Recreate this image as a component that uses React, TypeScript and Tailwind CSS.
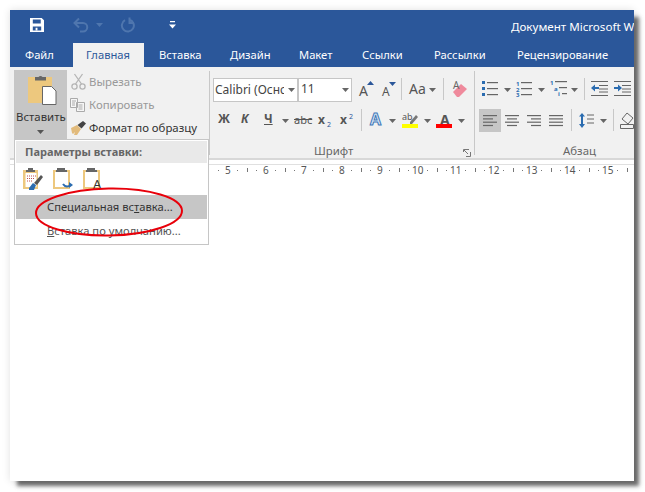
import React from "react";

const Abs = ({ x, y, c = "", children }: { x: number; y: number; c?: string; children: React.ReactNode }) => (
  <div className={"absolute whitespace-nowrap leading-none " + c} style={{ left: x, top: y }}>{children}</div>
);

const Sep = ({ x, y, h }: { x: number; y: number; h: number }) => (
  <div className="absolute w-px bg-[#c8c8c8]" style={{ left: x, top: y, height: h }} />
);

const Caret = ({ x, y, color = "#666" }: { x: number; y: number; color?: string }) => (
  <svg className="absolute" style={{ left: x, top: y }} width="7" height="4" viewBox="0 0 7 4"><path d="M0 0h7L3.5 4z" fill={color} /></svg>
);

const Lines = ({ x, y, kind }: { x: number; y: number; kind: number[][] }) => (
  <svg className="absolute" style={{ left: x, top: y }} width="16" height="12" viewBox="0 0 16 12">
    {kind.map(([a, b], i) => <rect key={i} x={a} y={i * 3.3} width={b - a} height="1.2" fill="#666" />)}
  </svg>
);

const rulerNums = [5, 6, 7, 8, 9, 10, 11, 12, 13, 14, 15];

export default function App() {
  return (
    <div className="relative w-[645px] h-[492px] overflow-hidden bg-white font-['Open_Sans',sans-serif]">
      <div className="absolute left-[10px] top-[10px] w-[624px] h-[471px] bg-white shadow-[6px_6px_4px_-1px_rgba(70,70,70,0.8),0_0_8px_rgba(0,0,0,0.12)]" />
      <div className="absolute left-[10px] top-[10px] w-[624px] h-[471px] overflow-hidden">
        <div className="absolute inset-x-0 top-0 h-[57px] bg-[#2b579a]" />
        <div className="absolute inset-x-0 top-[57px] h-[92px] bg-[#f1f1f1]" />
        <div className="absolute inset-x-0 top-[148px] h-[2px] bg-[#d8d8d8]" />
        <div className="absolute inset-x-0 top-[154px] h-px bg-[#e0e0e0]" />
      </div>

      {/* Title bar */}
      <svg className="absolute left-[30px] top-[18px]" width="14" height="14" viewBox="0 0 15 15">
        <path fillRule="evenodd" fill="#fff" d="M0 0h12.5L15 2.5V15H0zM3 1.5v4.5h8.500V1.500zM3 9v4.500h9V9zM6 10.500h2V13H6z" />
      </svg>
      <svg className="absolute left-[72px] top-[17px]" width="18" height="16" viewBox="0 0 18 16" fill="none" stroke="#4f76ae" strokeWidth="2">
        <path d="M7 1.500L2.500 6 7 10.500M2.500 6H11a4.200 4.200 0 0 1 0 8.500H8" />
      </svg>
      <Caret x={96} y={23} color="#4f76ae" />
      <svg className="absolute left-[119px] top-[17px]" width="16" height="16" viewBox="0 0 16 16" fill="none" stroke="#4f76ae" strokeWidth="2">
        <path d="M6 3.200a6 6 0 1 0 4.500-.5M10.500 0.500v5.500H15" />
      </svg>
      <svg className="absolute left-[169px] top-[21px]" width="7" height="8" viewBox="0 0 7 8"><path d="M1 0h5v1.200H1zM0 3.500h7L3.500 7.500z" fill="#fff" /></svg>
      <div className="absolute left-[511px] top-[20px] w-[123px] overflow-hidden whitespace-nowrap text-[11.6px] leading-[14px] text-white">Документ Microsoft Word</div>

      {/* Tabs */}
      <div className="absolute left-[73px] top-[43px] w-[71px] h-[25px] bg-[#f1f1f1]" />
      <Abs x={25} y={49} c="text-[11.2px] text-white">Файл</Abs>
      <Abs x={86} y={49} c="text-[11.2px] text-[#2b579a]">Главная</Abs>
      <Abs x={159} y={49} c="text-[11.2px] text-white">Вставка</Abs>
      <Abs x={230} y={49} c="text-[11.2px] text-white">Дизайн</Abs>
      <Abs x={299} y={49} c="text-[11.2px] text-white">Макет</Abs>
      <Abs x={362} y={49} c="text-[11.2px] text-white">Ссылки</Abs>
      <Abs x={434} y={49} c="text-[11.2px] text-white">Рассылки</Abs>
      <Abs x={517} y={49} c="text-[11.2px] text-white">Рецензирование</Abs>

      {/* Clipboard group */}
      <div className="absolute left-[14px] top-[70px] w-[53px] h-[69px] bg-[#c6c6c6]" />
      <svg className="absolute left-[27px] top-[74px]" width="30" height="32" viewBox="0 0 30 32">
        <path d="M1 3h24v26H1z" fill="#edc87e" />
        <path d="M8 5V3h3.500a2.500 2.500 0 0 1 4 0H19v3.500H8z" fill="#666" />
        <path d="M15.500 12.500h9l4.500 4.500V30.500H15.500z" fill="#fff" stroke="#666" />
      </svg>
      <Abs x={16} y={111} c="text-[11.4px] text-[#333]">Вставить</Abs>
      <Caret x={37} y={130} color="#555" />

      <svg className="absolute left-[71px] top-[73px]" width="15" height="17" viewBox="0 0 15 17" fill="none" stroke="#b5b5b5" strokeWidth="1.3">
        <circle cx="3.500" cy="13.500" r="2.600" /><circle cx="11.500" cy="13.500" r="2.600" /><path d="M4.500 11L11.500 1M10.500 11L3.500 1" />
      </svg>
      <Abs x={89} y={76} c="text-[11.4px] text-[#999]">Вырезать</Abs>
      <svg className="absolute left-[70px] top-[98px]" width="15" height="14" viewBox="0 0 15 14" fill="#f6f6f6" stroke="#aaa">
        <path d="M.5.5h7v9h-7zM6.500 4.500h8v9h-8zM2 3h4M2 5h3M2 7h3M8.500 7h4M8.500 9h4M8.500 11h4" />
      </svg>
      <Abs x={89} y={99} c="text-[11.4px] text-[#999]">Копировать</Abs>
      <svg className="absolute left-[70px] top-[120px]" width="17" height="16" viewBox="0 0 17 16">
        <path d="M1 8l6-3 4 4-4 6H4l1-3-2 2-1-1z" fill="#e2bb7c" />
        <path d="M7.500 5L13 1l3 2.500-4.500 5z" fill="#444" />
      </svg>
      <Abs x={89} y={122} c="text-[11.4px] text-[#333]">Формат по образцу</Abs>

      <Sep x={209} y={71} h={84} />

      {/* Font */}
      <div className="absolute left-[213px] top-[78px] w-[85px] h-[24px] bg-white border border-[#c6c6c6]" />
      <div className="absolute left-[215px] top-[84px] w-[69px] overflow-hidden whitespace-nowrap text-[12px] text-[#444] leading-none font-['Liberation_Sans',sans-serif]">Calibri (Оснс</div>
      <Caret x={288} y={88} />
      <div className="absolute left-[298px] top-[78px] w-[54px] h-[24px] bg-white border border-[#c6c6c6] text-[12px] text-[#444] pl-[2px] pt-[4px] leading-none">11</div>
      <Caret x={342} y={88} />
      <Abs x={359} y={84} c="text-[14px] text-[#555]">A</Abs>
      <svg className="absolute left-[367px] top-[81px]" width="7" height="4"><path d="M0 4L3.500 0 7 4z" fill="#2b579a" /></svg>
      <Abs x={382} y={86} c="text-[12px] text-[#555]">A</Abs>
      <svg className="absolute left-[389px] top-[82px]" width="7" height="4"><path d="M0 0h7L3.500 4z" fill="#2b579a" /></svg>
      <Sep x={401} y={78} h={22} />
      <Abs x={409} y={82} c="text-[14px] text-[#555]">Aa</Abs>
      <Caret x={429} y={88} />
      <Sep x={443} y={78} h={22} />
      <svg className="absolute left-[451px] top-[83px]" width="18" height="15" viewBox="0 0 18 15"><path d="M2 9l8-8 6 5-8 8H6z" fill="#ef8a9c" /></svg>
      <Abs x={453} y={80} c="text-[10px] text-[#666]">A</Abs>

      <Abs x={218} y={113} c="text-[12px] font-bold text-[#555]">Ж</Abs>
      <Abs x={241} y={113} c="text-[12px] font-bold italic text-[#555]">К</Abs>
      <Abs x={264} y={113} c="text-[12px] font-bold underline text-[#555]">Ч</Abs>
      <Caret x={282} y={119} />
      <Abs x={294} y={114} c="text-[11px] line-through text-[#555]">abc</Abs>
      <Abs x={318} y={114} c="text-[12px] font-bold text-[#555]">x</Abs>
      <Abs x={327} y={121} c="text-[7px] text-[#2b579a]">2</Abs>
      <Abs x={340} y={114} c="text-[12px] font-bold text-[#555]">x</Abs>
      <Abs x={349} y={113} c="text-[7px] text-[#2b579a]">2</Abs>
      <Sep x={361} y={109} h={22} />
      <Abs x={370} y={111} c="text-[16px] font-bold text-[#dbe8f6] [-webkit-text-stroke:1px_#3f78b8]">A</Abs>
      <Caret x={389} y={119} />
      <Abs x={402} y={112} c="text-[9px] text-[#555]">ab</Abs>
      <svg className="absolute left-[402px] top-[113px]" width="17" height="16" viewBox="0 0 17 16">
        <path d="M8 9l6-7 2 2-6 7H8z" fill="#777" /><rect x="0" y="11" width="16" height="4" fill="#ffff00" />
      </svg>
      <Caret x={424} y={119} />
      <Abs x={440} y={113} c="text-[14px] font-bold text-[#555]">A</Abs>
      <div className="absolute left-[436px] top-[124px] w-[16px] h-[4px] bg-[#f00]" />
      <Caret x={458} y={119} />

      <Abs x={314} y={145} c="text-[11.4px] text-[#666]">Шрифт</Abs>
      <svg className="absolute left-[463px] top-[149px]" width="8" height="8" viewBox="0 0 8 8" fill="none" stroke="#777"><path d="M.5 3V.5H6M1 1l4 4M7.500 3v4.500H3" /></svg>
      <Sep x={474} y={71} h={84} />

      {/* Paragraph */}
      <svg className="absolute left-[482px] top-[81px]" width="16" height="16" viewBox="0 0 16 16">
        <rect x="0" y="0" width="3" height="3" fill="#2b6cb0" /><rect x="0" y="6" width="3" height="3" fill="#2b6cb0" /><rect x="0" y="12" width="3" height="3" fill="#2b6cb0" />
        <rect x="5" y="1" width="11" height="1.200" fill="#666" /><rect x="5" y="7" width="11" height="1.200" fill="#666" /><rect x="5" y="13" width="11" height="1.200" fill="#666" />
      </svg>
      <Caret x={504} y={88} />
      <svg className="absolute left-[516px] top-[81px]" width="16" height="16" viewBox="0 0 16 16">
        <text x="0" y="5" fontSize="6" fill="#2b6cb0" fontWeight="700">1</text><text x="0" y="10.500" fontSize="6" fill="#2b6cb0" fontWeight="700">2</text><text x="0" y="16" fontSize="6" fill="#2b6cb0" fontWeight="700">3</text>
        <rect x="5" y="1" width="11" height="1.200" fill="#666" /><rect x="5" y="7" width="11" height="1.200" fill="#666" /><rect x="5" y="13" width="11" height="1.200" fill="#666" />
      </svg>
      <Caret x={538} y={88} />
      <svg className="absolute left-[550px] top-[80px]" width="17" height="17" viewBox="0 0 17 17">
        <text x="0" y="5" fontSize="6" fill="#2b6cb0" fontWeight="700">1</text><text x="4" y="10.500" fontSize="6" fill="#2b6cb0" fontWeight="700">a</text><text x="8" y="16" fontSize="6" fill="#2b6cb0" fontWeight="700">i</text>
        <rect x="5" y="1" width="12" height="1.200" fill="#666" /><rect x="9" y="7" width="8" height="1.200" fill="#666" /><rect x="12" y="13" width="5" height="1.200" fill="#666" />
      </svg>
      <Caret x={571} y={88} />
      <Sep x={584} y={78} h={22} />
      <svg className="absolute left-[591px] top-[81px]" width="17" height="15" viewBox="0 0 17 15">
        <path d="M0 .5h17M8 4.500h9M8 8h9M8 11h9M0 14.500h17" stroke="#666" fill="none" /><path d="M0 7l4-3.500V6h4v2H4v2.500z" fill="#2b6cb0" />
      </svg>
      <svg className="absolute left-[614px] top-[81px]" width="17" height="15" viewBox="0 0 17 15">
        <path d="M0 .5h17M8 4.500h9M8 8h9M8 11h9M0 14.500h17" stroke="#666" fill="none" /><path d="M8 7L4 3.500V6H0v2h4v2.500z" fill="#2b6cb0" />
      </svg>

      <div className="absolute left-[479px] top-[109px] w-[22px] h-[23px] bg-[#c6c6c6]" />
      <Lines x={483} y={115} kind={[[0, 14], [0, 10], [0, 14], [0, 10]]} />
      <Lines x={505} y={115} kind={[[0, 14], [2, 12], [0, 14], [2, 12]]} />
      <Lines x={527} y={115} kind={[[0, 14], [4, 14], [0, 14], [4, 14]]} />
      <Lines x={549} y={115} kind={[[0, 14], [0, 14], [0, 14], [0, 14]]} />
      <Sep x={571} y={109} h={22} />
      <svg className="absolute left-[579px] top-[112px]" width="15" height="17" viewBox="0 0 15 17">
        <path d="M3 1L0 4.500h2V12H0l3 4 3-4H4V4.500h2z" fill="#2b6cb0" /><path d="M8 3h7M8 7h7M8 11h7" stroke="#666" fill="none" />
      </svg>
      <Caret x={600} y={119} />
      <Sep x={613} y={109} h={22} />
      <svg className="absolute left-[620px] top-[111px]" width="14" height="18" viewBox="0 0 14 18" fill="none" stroke="#666"><path d="M2 8l5-6 6 5-5 6zM.5 13.500h13v4H.5z" /></svg>
      <Abs x={563} y={145} c="text-[11.4px] text-[#666]">Абзац</Abs>

      {/* Ruler */}
      <div className="absolute left-[14px] top-[165px] w-[6px] h-[10px] bg-[#c6c6c6]" />
      {rulerNums.map((n, i) => (
        <React.Fragment key={n}>
          <Abs x={(n >= 10 ? 222 : 225) + i * 38} y={165} c="text-[10px] text-[#555] font-['Liberation_Sans',sans-serif]">{n}</Abs>
          <div className="absolute w-px h-[4px] bg-[#777]" style={{ left: 247 + i * 38, top: 168 }} />
          <div className="absolute w-px h-px bg-[#777]" style={{ left: 218 + i * 38, top: 170 }} />
          <div className="absolute w-px h-px bg-[#777]" style={{ left: 237 + i * 38, top: 170 }} />
          <div className="absolute w-px h-px bg-[#777]" style={{ left: 256 + i * 38, top: 170 }} />
        </React.Fragment>
      ))}

      {/* Menu */}
      <div className="absolute left-[14px] top-[139px] w-[195px] h-[106px] bg-white border border-[#c6c6c6]">
        <div className="absolute left-px top-px w-[191px] h-[22px] bg-[#e9e9e9] text-[11px] font-bold text-[#666] pl-[9px] pt-[5px] leading-none">Параметры вставки:</div>
        <div className="absolute left-px top-[55px] w-[191px] h-[24px] bg-[#c6c6c6]" />
        <Abs x={32} y={61} c="text-[11.2px] text-[#333]"><span>Специальная вс<u>т</u>авка...</span></Abs>
        <Abs x={32} y={85} c="text-[11.2px] text-[#555]"><span><u>В</u>ставка по умолчанию...</span></Abs>
      </div>
      <svg className="absolute left-[22px] top-[167px]" width="22" height="24" viewBox="0 0 22 24">
        <path d="M1 3h15v19H1z" fill="#edc87e" /><path d="M3.500 6h11v14h-11z" fill="#fff" />
        <path d="M6 3V1h5v2h2v2H4V3z" fill="#666" />
        <path d="M5 9h9M5 11.500h8M5 14h5" stroke="#c0504d" strokeDasharray="1 1" />
        <path d="M7 21l4-5 3 2-2 5H7z" fill="#2b6cb0" /><path d="M12 16l7-8 2 2-6 8z" fill="#555" />
      </svg>
      <svg className="absolute left-[52px] top-[167px]" width="22" height="24" viewBox="0 0 22 24">
        <path d="M1 3h17v19H1z" fill="#edc87e" /><path d="M3 5h13v15H3z" fill="#fff" />
        <path d="M5 3V1h8v2h2v2H4V3z" fill="#666" />
        <path d="M11 17c2 3 5 3 8 1" stroke="#2b6cb0" strokeWidth="2" fill="none" /><path d="M17 15l4 3-4 3z" fill="#2b6cb0" />
      </svg>
      <svg className="absolute left-[82px] top-[167px]" width="22" height="24" viewBox="0 0 22 24">
        <path d="M1 3h17v19H1z" fill="#edc87e" /><path d="M3 5h13v15H3z" fill="#fff" />
        <path d="M5 3V1h8v2h2v2H4V3z" fill="#666" />
      </svg>
      <Abs x={93} y={178} c="text-[13px] text-[#333]">A</Abs>

      {/* Red ellipse */}
      <svg className="absolute left-[30px] top-[183px]" width="160" height="60" viewBox="0 0 160 60" fill="none">
        <ellipse cx="79" cy="29" rx="73" ry="23.500" stroke="#e8000a" strokeWidth="2" transform="rotate(-1 79 29)" />
      </svg>
    </div>
  );
}
